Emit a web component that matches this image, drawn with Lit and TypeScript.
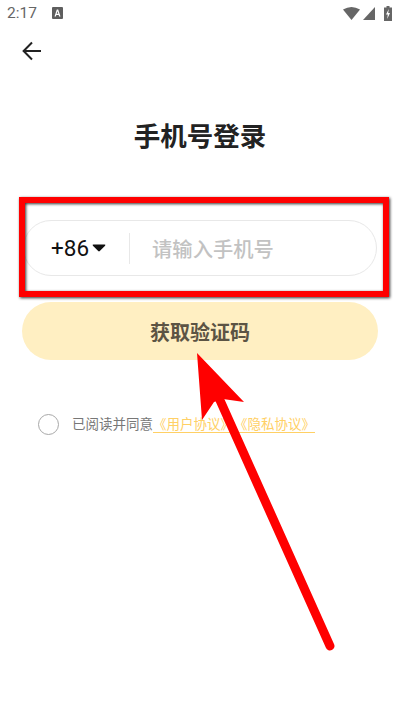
import { css, html, LitElement } from 'lit';
import { customElement } from 'lit/decorators.js';

@customElement('app-root')
export class AppRoot extends LitElement {
  public render() {
    return html`
      <div class="status">
        <span class="time">2:17</span>
        <svg class="a-badge" width="11" height="12" viewBox="0 0 11 12">
          <rect width="11" height="12" rx="1" fill="#5e5e5e"></rect>
          <path d="M2.500 9.500L4.800 2.500h1.400L8.500 9.500H7.100L6.700 8H4.300L3.900 9.500zM4.700 6.800h1.600L5.500 4.200z" fill="#fff"></path>
        </svg>
        <span class="spacer"></span>
        <svg width="17" height="13" viewBox="0 0 17 13"><path d="M0 2.500Q8.500-2.500 17 2.500L8.500 13z" fill="#666"></path></svg>
        <svg class="signal" width="12" height="13" viewBox="0 0 12 13"><path d="M12 0v13H0z" fill="#666"></path></svg>
        <svg class="battery" width="8" height="15" viewBox="0 0 8 15">
          <path d="M2.500 0h3v1.500H8V15H0V1.500h2.500z" fill="#666"></path>
          <path d="M4.800 3L2 8.500h1.800L3.200 13 6 7H4.200z" fill="#fff"></path>
        </svg>
      </div>

      <button class="back" aria-label="back">
        <svg width="20" height="20" viewBox="0 0 20 20" fill="none" stroke="#222" stroke-width="2">
          <path d="M19 10H2M10 1.500L1.600 10l8.400 8.500"></path>
        </svg>
      </button>

      <h1 class="title">手机号登录</h1>

      <div class="phone">
        <span class="code">+86</span>
        <svg class="caret" width="14" height="8" viewBox="0 0 14 8">
          <path d="M1.500.5h11q1.500 0 .6 1.200L7.800 7q-.8.800-1.600 0L.9 1.700Q0 .5 1.500.5z" fill="#111"></path>
        </svg>
        <span class="divider"></span>
        <span class="placeholder">请输入手机号</span>
      </div>

      <button class="submit">获取验证码</button>

      <div class="agree">
        <span class="radio"></span>
        <span class="agree-text">已阅读并同意<span class="link">《用户协议》《隐私协议》</span></span>
      </div>

      <div class="mark-box"></div>
      <svg class="mark-arrow" width="400" height="711" viewBox="0 0 400 711">
        <path d="M330 646L219 398" stroke="#f00" stroke-width="9" stroke-linecap="round" fill="none"></path>
        <path d="M197 353L244 402L223 399L214 402L202 420z" fill="#f00"></path>
      </svg>
    `;
  }

  public static styles = css`
    :host {
      display: block;
      position: relative;
      width: 400px;
      height: 711px;
      overflow: hidden;
      background: #fff;
      font-family: 'Roboto', 'Noto Sans CJK SC', sans-serif;
      text-spacing-trim: space-all;
    }
    .status {
      display: flex;
      align-items: center;
      height: 27px;
      padding: 0 8px 0 7px;
      color: #666;
    }
    .time {
      font-size: 15.500px;
      line-height: 27px;
    }
    .a-badge {
      margin-left: 15px;
      margin-top: -1px;
    }
    .spacer {
      flex: 1;
    }
    .signal {
      margin-left: 3px;
    }
    .battery {
      margin-left: 9px;
      margin-top: -1px;
    }
    .back {
      display: block;
      margin: 14px 0 0 22px;
      padding: 0;
      border: 0;
      background: none;
      height: 20px;
    }
    .title {
      margin: 56px 0 0;
      font-size: 26.500px;
      line-height: 40px;
      font-weight: 700;
      text-align: center;
      color: #222;
    }
    .phone {
      display: flex;
      align-items: center;
      box-sizing: border-box;
      height: 56px;
      margin: 63px 23px 0;
      padding-left: 27px;
      border: 1px solid #e8e8e8;
      border-radius: 28px;
    }
    .code {
      font-size: 22.500px;
      color: #111;
    }
    .caret {
      margin-left: 3px;
    }
    .divider {
      width: 1px;
      height: 31px;
      margin: 0 22px 0 23px;
      background: #e8e8e8;
    }
    .placeholder {
      font-size: 20.300px;
      font-weight: 500;
      color: #c2c2c2;
    }
    .submit {
      display: block;
      box-sizing: border-box;
      width: 356px;
      height: 58px;
      margin: 26px 22px 0;
      padding: 0;
      border: 0;
      border-radius: 29px;
      background: #ffefc2;
      color: #5c5444;
      font-family: inherit;
      font-size: 20px;
      font-weight: 700;
    }
    .agree {
      display: flex;
      align-items: center;
      margin: 54px 0 0 38px;
    }
    .radio {
      box-sizing: border-box;
      width: 21px;
      height: 21px;
      border: 1.500px solid #a8a8a8;
      border-radius: 50%;
    }
    .agree-text {
      margin: -3px 0 0 13px;
      font-size: 13.500px;
      color: #777;
    }
    .link {
      color: #ffd065;
      border-bottom: 1.500px solid #ffd065;
    }
    .mark-box {
      position: absolute;
      left: 19px;
      top: 197px;
      box-sizing: border-box;
      width: 370px;
      height: 100px;
      border: 6px solid #f00;
      filter: drop-shadow(1px 1px 1.500px #333);
    }
    .mark-arrow {
      position: absolute;
      left: 0;
      top: 0;
    }
  `;
}
